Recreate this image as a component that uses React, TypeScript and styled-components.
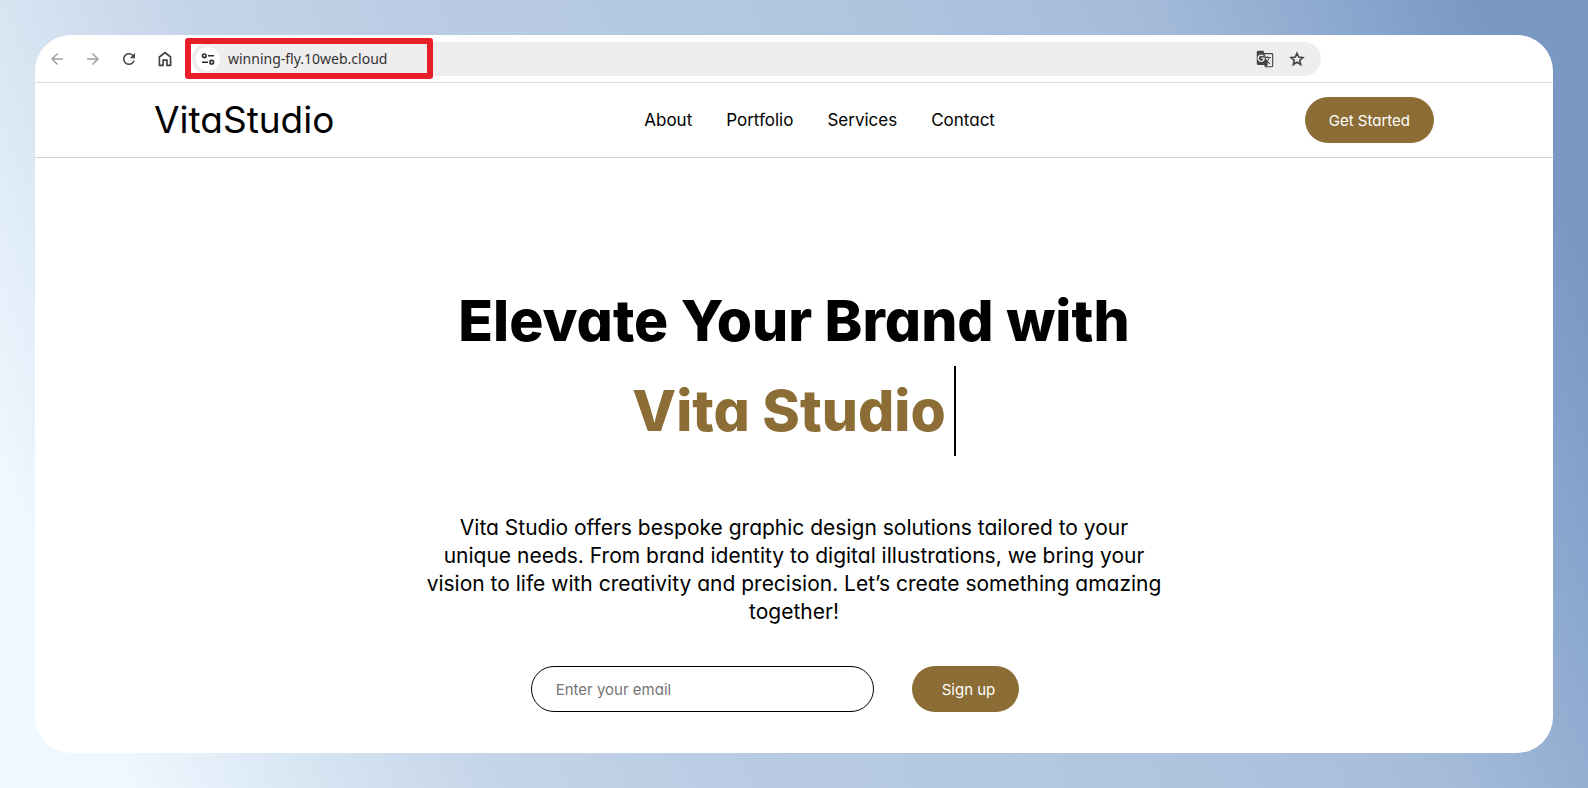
import React from "react";
import styled, { createGlobalStyle } from "styled-components";
import { MdArrowBack, MdArrowForward, MdGTranslate, MdRefresh } from "react-icons/md";

const ink = "#000000";
const bronze = "#8c6d35";

const GlobalStyle = createGlobalStyle`
  *, *::before, *::after { box-sizing: border-box; }
  body {
    margin: 0;
    color: ${ink};
    font-family: Inter, "Open Sans", sans-serif;
    font-feature-settings: "cv11" 1;
  }
  button, input { font: inherit; font-feature-settings: inherit; }
`;

const Backdrop = styled.div`
  display: flex;
  min-height: 100vh;
  padding: 35px;
  background: linear-gradient(
    68deg,
    #eff7ff 7%,
    #d6e5f2 17%,
    #c5d5e8 26%,
    #b8cbe3 40%,
    #b3c7e0 55%,
    #abc0dd 70%,
    #a3bad9 77%,
    #95afd2 83%,
    #87a5cd 88%,
    #7998c3 94%
  );
`;

const BrowserWindow = styled.div`
  flex: 1;
  min-width: 0;
  background: #ffffff;
  border-radius: 36px;
`;

const Toolbar = styled.div`
  display: flex;
  align-items: center;
  gap: 12px;
  height: 48px;
  padding: 0 232px 0 10px;
  border-bottom: 1px solid #dcdcdc;
`;

const ToolButton = styled.button<{ $muted?: boolean }>`
  display: grid;
  place-items: center;
  flex: none;
  width: 24px;
  height: 24px;
  padding: 0;
  border: 0;
  background: none;
  color: ${(p) => (p.$muted ? "#a0a0a0" : "#444444")};
`;

const AddressBar = styled.div`
  position: relative;
  display: flex;
  flex: 1;
  align-items: center;
  gap: 8px;
  height: 34px;
  margin-left: 3px;
  padding: 0 12px 0 4px;
  border-radius: 17px;
  background: #efedee;
`;

const SiteInfo = styled(ToolButton)`
  border-radius: 50%;
  background: #ffffff;
`;

const AddressInput = styled.input`
  flex: 1;
  min-width: 0;
  padding: 0;
  border: 0;
  outline: 0;
  background: none;
  color: #333333;
  font-family: "Noto Sans", "Open Sans", sans-serif;
  font-size: 14px;
  line-height: 20px;
`;

const Highlight = styled.div`
  position: absolute;
  top: -4px;
  left: -7px;
  width: 248px;
  height: 41px;
  border: 6px solid #e81f28;
  border-radius: 3px;
  pointer-events: none;
`;

const SiteHeader = styled.header`
  display: flex;
  align-items: center;
  justify-content: space-between;
  height: 75px;
  padding: 0 119px;
  border-bottom: 1px solid #d0d0d0;
`;

const Logo = styled.a`
  color: ${ink};
  font-size: 37px;
  line-height: 48px;
  text-decoration: none;
`;

const Nav = styled.nav`
  display: flex;
  gap: 34px;
`;

const NavLink = styled.a`
  color: ${ink};
  font-size: 17px;
  line-height: 24px;
  text-decoration: none;
`;

const PillButton = styled.button`
  height: 46px;
  padding: 0 24px;
  border: 0;
  border-radius: 23px;
  background: ${bronze};
  color: #ffffff;
  font-size: 15px;
`;

const SubmitButton = styled(PillButton)`
  padding-left: 30px;
`;

const Hero = styled.main`
  display: flex;
  flex-direction: column;
  align-items: center;
  padding: 118px 24px 40px;
`;

const Title = styled.h1`
  margin: 0;
  font-size: 57px;
  font-weight: 800;
  line-height: 90px;
  text-align: center;
`;

const TypedText = styled.span`
  display: block;
  width: fit-content;
  margin: 0 auto;
  padding-right: 8px;
  border-right: 2px solid ${ink};
  color: ${bronze};
`;

const Lead = styled.p`
  max-width: 738px;
  margin: 58px 0 40px;
  font-size: 21px;
  line-height: 28px;
  text-align: center;
`;

const SignupForm = styled.form`
  display: flex;
  gap: 38px;
  padding-right: 38px;
`;

const EmailInput = styled.input`
  width: 343px;
  height: 46px;
  padding: 0 24px;
  border: 1px solid ${ink};
  border-radius: 23px;
  background: #ffffff;
  font-size: 15px;
  &::placeholder { color: #757575; opacity: 1; }
`;

const HomeIcon = () => (
  <svg width="20" height="20" viewBox="0 0 20 20" fill="none" stroke="currentColor" strokeWidth="1.7">
    <path d="M4.4 16.4V8L10 3.6 15.6 8v8.4h-3.7v-5.2H8.1v5.2z" />
  </svg>
);

const StarIcon = () => (
  <svg width="18" height="18" viewBox="0 0 18 18" fill="none" stroke="currentColor" strokeWidth="1.6">
    <path d="M9 3.2l1.7 3.9 4.2.4-3.2 2.8 1 4.2L9 12.3l-3.7 2.2 1-4.2-3.2-2.8 4.2-.4z" />
  </svg>
);

const TuneIcon = () => (
  <svg width="16" height="16" viewBox="0 0 16 16" fill="none" stroke="#2a2a2a" strokeWidth="1.6">
    <circle cx="4.3" cy="4.8" r="1.8" />
    <path d="M8 4.8h6M2 11.2h6" />
    <circle cx="11.7" cy="11.2" r="1.8" />
  </svg>
);

const links = ["About", "Portfolio", "Services", "Contact"];

export default function App() {
  return (
    <>
      <GlobalStyle />
      <Backdrop>
        <BrowserWindow>
          <Toolbar>
            <ToolButton $muted aria-label="Back"><MdArrowBack size={18} /></ToolButton>
            <ToolButton $muted aria-label="Forward"><MdArrowForward size={18} /></ToolButton>
            <ToolButton aria-label="Reload"><MdRefresh size={18} /></ToolButton>
            <ToolButton aria-label="Home"><HomeIcon /></ToolButton>
            <AddressBar>
              <SiteInfo aria-label="Site information"><TuneIcon /></SiteInfo>
              <AddressInput type="text" aria-label="Address" defaultValue="winning-fly.10web.cloud" />
              <ToolButton aria-label="Translate page"><MdGTranslate size={18} /></ToolButton>
              <ToolButton aria-label="Bookmark page"><StarIcon /></ToolButton>
              <Highlight />
            </AddressBar>
          </Toolbar>
          <SiteHeader>
            <Logo href="#">VitaStudio</Logo>
            <Nav aria-label="Main">
              {links.map((name) => (
                <NavLink key={name} href={`#${name.toLowerCase()}`}>{name}</NavLink>
              ))}
            </Nav>
            <PillButton type="button">Get Started</PillButton>
          </SiteHeader>
          <Hero>
            <Title>
              Elevate Your Brand with
              <TypedText>Vita Studio</TypedText>
            </Title>
            <Lead>
              Vita Studio offers bespoke graphic design solutions tailored to your unique needs. From
              brand identity to digital illustrations, we bring your vision to life with creativity and
              precision. Let’s create something amazing together!
            </Lead>
            <SignupForm onSubmit={(e) => e.preventDefault()}>
              <EmailInput type="email" aria-label="Email" placeholder="Enter your email" />
              <SubmitButton type="submit">Sign up</SubmitButton>
            </SignupForm>
          </Hero>
        </BrowserWindow>
      </Backdrop>
    </>
  );
}
